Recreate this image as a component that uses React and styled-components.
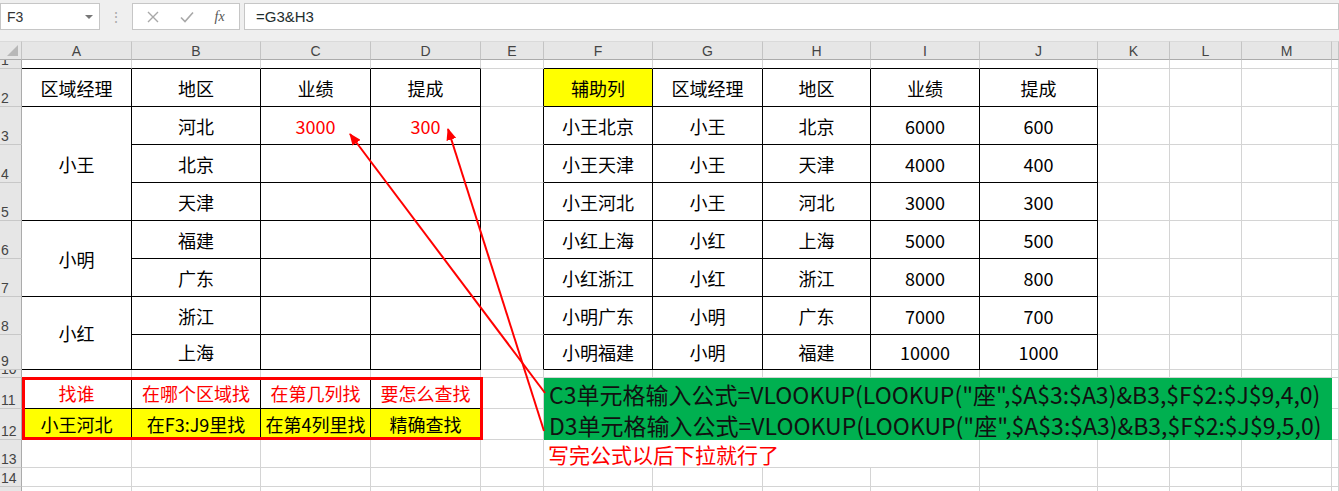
import React from 'react'
import styled, { createGlobalStyle } from 'styled-components'

const Global = createGlobalStyle`
  html, body { margin: 0; padding: 0; height: 491px; overflow: hidden; background: #fff; }
  body { font-family: "Noto Sans CJK SC", "Noto Sans", sans-serif; }
`

const WIDTHS = [22, 110, 129, 110, 110, 63, 109, 110, 108, 109, 118, 72, 72, 90]
const LETTERS = ['A', 'B', 'C', 'D', 'E', 'F', 'G', 'H', 'I', 'J', 'K', 'L', 'M', '']
const HEIGHTS = [9, 38, 38, 38, 38, 38, 38, 38, 35, 8, 31, 31, 28, 19, 30]
const RED = '#ff0000'
const YELLOW = '#ffff00'

// cell contents, keyed "row-col" (col 1 = A)
const cells = {}
const put = (r, c, text, extra = {}) => { cells[`${r}-${c}`] = { text, ...extra } }

;['区域经理', '地区', '业绩', '提成'].forEach((t, i) => put(2, i + 1, t))
put(3, 1, '小王', { rows: 3 })
put(6, 1, '小明', { rows: 2 })
put(8, 1, '小红', { rows: 2 })
;['河北', '北京', '天津', '福建', '广东', '浙江', '上海'].forEach((t, i) => put(3 + i, 2, t))
put(3, 3, '3000', { color: RED })
put(3, 4, '300', { color: RED })

put(2, 6, '辅助列', { bg: YELLOW })
;['区域经理', '地区', '业绩', '提成'].forEach((t, i) => put(2, 7 + i, t))
const lookup = [
  ['小王北京', '小王', '北京', '6000', '600'],
  ['小王天津', '小王', '天津', '4000', '400'],
  ['小王河北', '小王', '河北', '3000', '300'],
  ['小红上海', '小红', '上海', '5000', '500'],
  ['小红浙江', '小红', '浙江', '8000', '800'],
  ['小明广东', '小明', '广东', '7000', '700'],
  ['小明福建', '小明', '福建', '10000', '1000'],
]
lookup.forEach((row, i) => row.forEach((t, j) => put(3 + i, 6 + j, t)))

;['找谁', '在哪个区域找', '在第几列找', '要怎么查找'].forEach((t, i) => put(11, i + 1, t, { color: RED }))
;['小王河北', '在F3:J9里找', '在第4列里找', '精确查找'].forEach((t, i) => put(12, i + 1, t, { bg: YELLOW }))
put(13, 6, '写完公式以后下拉就行了', { cols: 4, color: RED, left: true, size: 21 })

// green merged block F11:M12 is drawn separately
const covered = (r, c) => r >= 11 && r <= 12 && c >= 6 && c <= 13

const blackRight = (r, c) =>
  (r >= 2 && r <= 9 && c >= 1 && c <= 10) || (r >= 11 && r <= 12 && c >= 1 && c <= 3)
const blackBottom = (r, c) =>
  (r >= 1 && r <= 9 && ((c >= 1 && c <= 4) || (c >= 6 && c <= 10))) || (r === 11 && c >= 1 && c <= 4)

const Page = styled.div`
  position: relative;
  width: 1339px;
  height: 491px;
  overflow: hidden;
`

const Toolbar = styled.div`
  height: 41px;
  box-sizing: border-box;
  background: #efefef;
  display: flex;
  align-items: flex-start;
  padding-top: 3px;
  font-family: "Liberation Sans", Arial, sans-serif;
  font-size: 14px;
  color: #333;
`

const Box = styled.div`
  height: 27px;
  box-sizing: border-box;
  background: #fff;
  border: 1px solid #c6c6c6;
  display: flex;
  align-items: center;
`

const NameBox = styled(Box)`
  width: 100px;
  padding: 0 6px;
  justify-content: space-between;
`

const Caret = styled.span`
  width: 0;
  height: 0;
  border-left: 4px solid transparent;
  border-right: 4px solid transparent;
  border-top: 4px solid #777;
`

const Grip = styled.div`
  width: 32px;
  height: 27px;
  display: flex;
  align-items: center;
  justify-content: center;
  color: #aaa;
  font-size: 14px;
`

const Buttons = styled(Box)`
  width: 108px;
  justify-content: space-around;
  padding: 0 4px;
  color: #aaa;
`

const Fx = styled.span`
  font-family: "Liberation Serif", serif;
  font-style: italic;
  font-size: 14px;
  color: #555;
`

const FormulaBox = styled(Box)`
  flex: 1;
  margin-left: 4px;
  padding-left: 11px;
  color: #1e2d2d;
  font-size: 15px;
`

const Sheet = styled.div`
  display: grid;
  grid-template-columns: ${WIDTHS.map(w => w + 'px').join(' ')} 1fr;
  grid-template-rows: 19px ${HEIGHTS.map(h => h + 'px').join(' ')};
  background: #fff;
`

const ColHead = styled.div`
  background: #e6e6e6;
  box-sizing: border-box;
  border-right: 1px solid #c4c4c4;
  border-bottom: 1px solid #ababab;
  border-top: 1px solid #dadada;
  display: flex;
  align-items: center;
  justify-content: center;
  font-family: "Liberation Sans", Arial, sans-serif;
  font-size: 14px;
  color: #444;
  position: relative;
`

const Corner = styled(ColHead)`
  justify-content: flex-end;
  align-items: flex-end;
  padding: 0 3px 3px 0;
`

const RowHead = styled.div`
  background: #e6e6e6;
  box-sizing: border-box;
  border-right: 1px solid #ababab;
  border-bottom: 1px solid #c8c8c8;
  display: flex;
  align-items: flex-end;
  padding-left: 1px;
  overflow: hidden;
  font-family: "Liberation Sans", Arial, sans-serif;
  font-size: 14px;
  line-height: 16px;
  color: #444;
`

const Cell = styled.div`
  box-sizing: border-box;
  border-right: 1px solid ${p => (p.$br ? '#000' : '#d4d4d4')};
  border-bottom: 1px solid ${p => (p.$bb ? '#000' : '#d4d4d4')};
  background: ${p => p.$bg || '#fff'};
  color: ${p => p.$color || '#000'};
  display: flex;
  align-items: center;
  justify-content: ${p => (p.$left ? 'flex-start' : 'center')};
  padding-left: ${p => (p.$left ? '4px' : '0')};
  font-size: ${p => p.$size || 18}px;
  white-space: nowrap;
  overflow: hidden;
`

const RedFrame = styled.div`
  grid-column: 2 / 6;
  grid-row: 12 / 14;
  margin: -1px -2px 0 0;
  border: 3px solid ${RED};
  z-index: 2;
  pointer-events: none;
`

const GreenBlock = styled.div`
  grid-column: 7 / 15;
  grid-row: 12 / 14;
  background: #00b050;
  display: grid;
  grid-template-rows: 31px 31px;
  align-items: center;
  padding-left: 5px;
  font-size: 23px;
  color: #111;
  white-space: nowrap;
  overflow: hidden;
`

const Arrows = styled.svg`
  position: absolute;
  left: 0;
  top: 0;
  pointer-events: none;
  z-index: 5;
`

export default function App() {
  const body = []
  HEIGHTS.forEach((_, i) => {
    const r = i + 1
    body.push(
      <RowHead key={`h${r}`} style={{ gridRow: r + 1, gridColumn: 1 }}>{r}</RowHead>
    )
    for (let c = 1; c <= 14; c++) {
      if (covered(r, c)) continue
      const info = cells[`${r}-${c}`]
      // skip cells hidden by a merge above or to the left
      let hidden = false
      Object.entries(cells).forEach(([k, v]) => {
        const [mr, mc] = k.split('-').map(Number)
        const rs = v.rows || 1
        const cs = v.cols || 1
        if ((mr !== r || mc !== c) && r >= mr && r < mr + rs && c >= mc && c < mc + cs) hidden = true
      })
      if (hidden) continue
      const rs = info?.rows || 1
      const cs = info?.cols || 1
      const lastR = r + rs - 1
      const lastC = c + cs - 1
      body.push(
        <Cell
          key={`${r}-${c}`}
          style={{ gridRow: `${r + 1} / span ${rs}`, gridColumn: `${c + 1} / span ${cs}` }}
          $br={blackRight(r, lastC)}
          $bb={blackBottom(lastR, c)}
          $bg={info?.bg}
          $color={info?.color}
          $left={info?.left}
          $size={info?.size}
        >
          {info?.text}
        </Cell>
      )
    }
  })

  return (
    <Page>
      <Global />
      <Toolbar>
        <NameBox>
          <span>F3</span>
          <Caret />
        </NameBox>
        <Grip>⋮</Grip>
        <Buttons>
          <svg width="12" height="12" viewBox="0 0 12 12">
            <path d="M1 1 L11 11 M11 1 L1 11" stroke="#a8a8a8" strokeWidth="1.4" />
          </svg>
          <svg width="14" height="12" viewBox="0 0 14 12">
            <path d="M1 6.5 L5 10.5 L13 1.5" stroke="#a8a8a8" strokeWidth="1.6" fill="none" />
          </svg>
          <Fx>fx</Fx>
        </Buttons>
        <FormulaBox>=G3&amp;H3</FormulaBox>
      </Toolbar>
      <Sheet>
        <Corner style={{ gridRow: 1, gridColumn: 1 }}>
          <svg width="11" height="11" viewBox="0 0 11 11">
            <path d="M11 0 L11 11 L0 11 Z" fill="#b8b8b8" />
          </svg>
        </Corner>
        {LETTERS.map((l, i) => (
          <ColHead key={l + i} style={{ gridRow: 1, gridColumn: i + 2 }}>{l}</ColHead>
        ))}
        {body}
        <RedFrame />
        <GreenBlock>
          <div>C3单元格输入公式=VLOOKUP(LOOKUP("座",$A$3:$A3)&amp;B3,$F$2:$J$9,4,0)</div>
          <div>D3单元格输入公式=VLOOKUP(LOOKUP("座",$A$3:$A3)&amp;B3,$F$2:$J$9,5,0)</div>
        </GreenBlock>
      </Sheet>
      <Arrows width="1339" height="491" viewBox="0 0 1339 491">
        <defs>
          <marker id="head" markerWidth="12" markerHeight="10" refX="11" refY="5" orient="auto" markerUnits="userSpaceOnUse">
            <path d="M0 0 L12 5 L0 10 Z" fill={RED} />
          </marker>
        </defs>
        <line x1="545" y1="393" x2="350" y2="134" stroke={RED} strokeWidth="2" markerEnd="url(#head)" />
        <line x1="544" y1="431" x2="448" y2="129" stroke={RED} strokeWidth="2" markerEnd="url(#head)" />
      </Arrows>
    </Page>
  )
}
